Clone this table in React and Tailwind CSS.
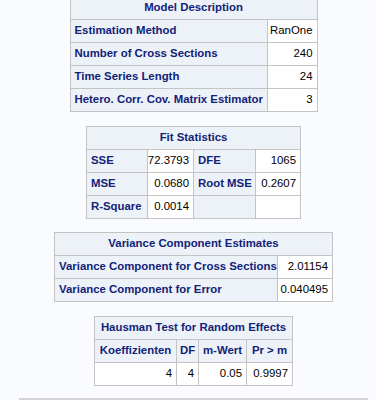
const hdr = 'bg-[#edf2f9] text-[#112277] font-bold';
const cell = 'h-[23px] border-r border-b border-[#c4c4c4] px-[4px] flex items-center whitespace-nowrap';

function Title({ children, span }) {
  return <div className={`${cell} ${hdr} justify-center ${span}`}>{children}</div>;
}

function H({ children, center }) {
  return <div className={`${cell} ${hdr} ${center ? 'justify-center' : ''}`}>{children}</div>;
}

function V({ children }) {
  return <div className={`${cell} bg-white text-black justify-end`}>{children}</div>;
}

export default function App() {
  return (
    <div className="min-h-[400px] h-[400px] overflow-hidden bg-[#fafbfe] flex flex-col font-['Liberation_Sans',Arial,sans-serif] text-[11.4px]">
      <div className="ml-[19px] w-[349px] flex flex-col">
        {/* Model Description */}
        <div className="mt-[-4px] mx-auto grid grid-cols-[197px_50px] border-l border-t border-[#c4c4c4]">
          <Title span="col-span-2">Model Description</Title>
          <H>Estimation Method</H>
          <V>RanOne</V>
          <H>Number of Cross Sections</H>
          <V>240</V>
          <H>Time Series Length</H>
          <V>24</V>
          <H>Hetero. Corr. Cov. Matrix Estimator</H>
          <V>3</V>
        </div>

        {/* Fit Statistics */}
        <div className="mt-[14px] mx-auto grid grid-cols-[61px_46px_62px_45px] border-l border-t border-[#c4c4c4]">
          <Title span="col-span-4">Fit Statistics</Title>
          <H>SSE</H>
          <V>72.3793</V>
          <H>DFE</H>
          <V>1065</V>
          <H>MSE</H>
          <V>0.0680</V>
          <H>Root MSE</H>
          <V>0.2607</V>
          <H>R-Square</H>
          <V>0.0014</V>
          <H></H>
          <V></V>
        </div>

        {/* Variance Component Estimates */}
        <div className="mt-[13px] mx-auto grid grid-cols-[223px_55px] border-l border-t border-[#c4c4c4]">
          <Title span="col-span-2">Variance Component Estimates</Title>
          <H>Variance Component for Cross Sections</H>
          <V>2.01154</V>
          <H>Variance Component for Error</H>
          <V>0.040495</V>
        </div>

        {/* Hausman Test */}
        <div className="mt-[14px] mx-auto grid grid-cols-[82px_22px_48px_46px] border-l border-t border-[#c4c4c4]">
          <Title span="col-span-4">Hausman Test for Random Effects</Title>
          <H center>Koeffizienten</H>
          <H center>DF</H>
          <H center>m-Wert</H>
          <H center>Pr &gt; m</H>
          <V>4</V>
          <V>4</V>
          <V>0.05</V>
          <V>0.9997</V>
        </div>

        <div className="mt-[12px] h-[2px] bg-[#d4d4d4]" />
      </div>
    </div>
  );
}
